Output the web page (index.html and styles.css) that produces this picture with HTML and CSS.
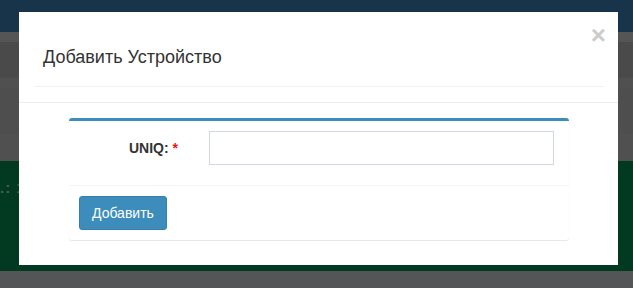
FILE: index.html
```html
<!DOCTYPE html>
<html lang="ru">
<head>
    <meta charset="UTF-8">
    <meta name="viewport" content="width=device-width, initial-scale=1.0">
    <title>Добавить Устройство</title>
    <link rel="stylesheet" href="styles.css">
</head>
<body>
    <div class="page">
        <div class="strip navbar"></div>
        <div class="strip s1"></div>
        <div class="strip s2"></div>
        <div class="strip s3"></div>
        <div class="strip s4"></div>
        <div class="strip s5"></div>
        <div class="strip green"><span class="ghost-text">.: 1</span></div>
        <div class="strip footer"></div>
    </div>

    <div class="modal">
        <button class="close" type="button">&times;</button>
        <div class="modal-header">
            <div class="title-wrap">
                <h4 class="modal-title">Добавить Устройство</h4>
            </div>
        </div>
        <div class="modal-body">
            <div class="box">
                <div class="box-body">
                    <div class="form-row">
                        <label for="uniq">UNIQ: <span class="required">*</span></label>
                        <input type="text" id="uniq">
                    </div>
                </div>
                <div class="box-footer">
                    <button class="btn-primary" type="button">Добавить</button>
                </div>
            </div>
        </div>
    </div>
</body>
</html>
```

FILE: styles.css
```css
* {
    box-sizing: border-box;
}
body {
    margin: 0;
    font-family: 'Liberation Sans', Arial, Helvetica, sans-serif;
    font-size: 14px;
    color: #333;
    background-color: #545557;
    overflow: hidden;
}
.page {
    display: flex;
    flex-direction: column;
}
.strip {
    width: 100%;
}
.navbar {
    height: 32px;
    background-color: #18344a;
}
.s1 {
    height: 10px;
    background-color: #555556;
}
.s2 {
    height: 36px;
    background-color: #4a4a4b;
}
.s3 {
    height: 10px;
    background-color: #505050;
}
.s4 {
    height: 45px;
    background-color: #4e4e4e;
}
.s5 {
    height: 28px;
    background-color: #505051;
}
.green {
    height: 110px;
    background-color: #013a21;
    padding-top: 18px;
}
.ghost-text {
    display: block;
    margin-left: 0;
    font-size: 15px;
    font-weight: bold;
    letter-spacing: 1px;
    color: #4b5d53;
    white-space: nowrap;
}
.footer {
    height: 17px;
    background-color: #545557;
}

.modal {
    position: absolute;
    top: 12px;
    left: 19px;
    width: 599px;
    height: 253px;
    background-color: #fff;
}
.close {
    position: absolute;
    top: 10px;
    right: 12px;
    padding: 0;
    border: 0;
    background: transparent;
    font-family: 'Liberation Sans', Arial, sans-serif;
    font-size: 26px;
    font-weight: bold;
    line-height: 1;
    color: #000;
    opacity: 0.2;
    cursor: pointer;
}
.modal-header {
    padding: 15px 14px 15px 15px;
    border-bottom: 1px solid #eeeeee;
}
.title-wrap {
    padding: 20px 0 19px 9px;
    border-bottom: 1px solid #f2f2f2;
}
.modal-title {
    margin: 0;
    font-size: 18px;
    font-weight: normal;
    line-height: 20px;
    color: #333;
}
.modal-body {
    padding: 15px 49px 25px 50px;
}
.box {
    background-color: #fff;
    border-top: 3px solid #3c8dbc;
    border-radius: 3px;
    box-shadow: 0 1px 1px rgba(0, 0, 0, 0.1);
}
.box-body {
    padding: 10px;
}
.form-row {
    display: grid;
    grid-template-columns: 114px 1fr;
    column-gap: 16px;
    padding-right: 5px;
    margin-bottom: 10px;
}
.form-row label {
    padding-right: 15px;
    text-align: right;
    font-weight: bold;
    line-height: 34px;
    color: #333;
}
.required {
    color: #ee1111;
}
.form-row input {
    height: 34px;
    width: 100%;
    padding: 6px 12px;
    border: 1px solid #d2d6de;
    border-radius: 0;
    font-size: 14px;
}
.box-footer {
    padding: 10px;
    border-top: 1px solid #f4f4f4;
}
.btn-primary {
    padding: 6px 12px;
    font-family: 'Liberation Sans', Arial, sans-serif;
    font-size: 14px;
    line-height: 20px;
    color: #fff;
    background-color: #3c8dbc;
    border: 1px solid #367fa9;
    border-radius: 3px;
    cursor: pointer;
}
```
